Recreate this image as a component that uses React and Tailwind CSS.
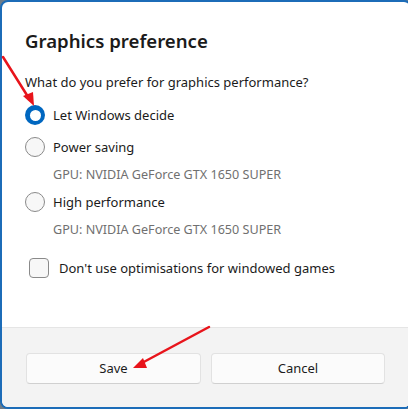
import React from "react";

const font = { fontFamily: '"Segoe UI", "Noto Sans", "Open Sans", sans-serif' };

function Radio({ checked }) {
  if (checked) {
    return (
      <span className="flex h-[20px] w-[20px] items-center justify-center rounded-full bg-[#0067c0]">
        <span className="h-[11px] w-[11px] rounded-full bg-white" />
      </span>
    );
  }
  return <span className="h-[20px] w-[20px] rounded-full border border-[#8a8a8a] bg-[#f7f7f7]" />;
}

function Option({ checked, label, sub, className }) {
  return (
    <div className={className}>
      <div className="flex items-center gap-[8px] pl-[23px]">
        <Radio checked={checked} />
        <span className="text-[13px] leading-[20px] text-[#1b1b1b]">{label}</span>
      </div>
      {sub && <div className="mt-[9px] pl-[51px] text-[12.6px] leading-[18px] text-[#707070]">{sub}</div>}
    </div>
  );
}

function Arrows() {
  return (
    <svg className="pointer-events-none absolute left-0 top-0" width="408" height="409">
      <g stroke="#e8141b" strokeWidth="2.5" strokeLinecap="round" fill="none">
        <line x1="3" y1="57" x2="30" y2="100" />
        <line x1="209" y1="327" x2="140" y2="364" />
      </g>
      <polygon points="34,106 23,96 33,92" fill="#e8141b" />
      <polygon points="133,368 143,358 147,368" fill="#e8141b" />
    </svg>
  );
}

export default function App() {
  return (
    <div className="relative h-[409px] w-[408px] overflow-hidden bg-[#6f7c88]" style={font}>
      <div className="flex h-[409px] w-[412px] flex-col overflow-hidden rounded-[8px] border-2 border-[#1c6cb8] bg-white">
        <div className="flex-1">
          <h1 className="pl-[23px] pt-[25px] text-[18.6px] font-semibold leading-[28px] text-[#1b1b1b]">
            Graphics preference
          </h1>
          <p className="mt-[17px] pl-[23px] text-[13px] leading-[20px] text-[#1b1b1b]">
            What do you prefer for graphics performance?
          </p>
          <Option className="mt-[13px]" checked label="Let Windows decide" />
          <Option className="mt-[12px]" label="Power saving" sub="GPU: NVIDIA GeForce GTX 1650 SUPER" />
          <Option className="mt-[8px]" label="High performance" sub="GPU: NVIDIA GeForce GTX 1650 SUPER" />
          <div className="mt-[19px] flex items-center gap-[10px] pl-[27px]">
            <span className="h-[20px] w-[20px] rounded-[4px] border border-[#8a8a8a] bg-[#f7f7f7]" />
            <span className="text-[13px] leading-[20px] text-[#1b1b1b]">Don't use optimisations for windowed games</span>
          </div>
        </div>
        <div className="flex h-[80px] gap-[10px] border-t border-[#e5e5e5] bg-[#f3f3f3] pl-[24px] pt-[25px]">
          <button className="h-[31px] w-[175px] rounded-[4px] border border-[#e2e2e2] border-b-[#d0d0d0] bg-[#fbfbfb] text-[13px] text-[#1b1b1b]">
            Save
          </button>
          <button className="h-[31px] w-[174px] rounded-[4px] border border-[#e2e2e2] border-b-[#d0d0d0] bg-[#fbfbfb] text-[13px] text-[#1b1b1b]">
            Cancel
          </button>
        </div>
      </div>
      <Arrows />
    </div>
  );
}
